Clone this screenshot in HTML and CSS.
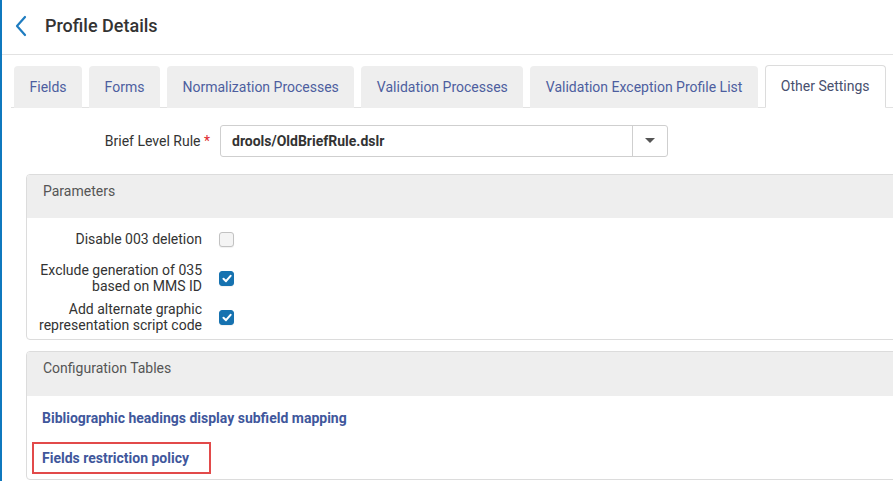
FILE: index.html
```html
<!DOCTYPE html>
<html>
<head>
<meta charset="utf-8">
<link rel="stylesheet" href="styles.css">
</head>
<body>
<div class="page">
  <header class="header">
    <svg class="back" width="14" height="22" viewBox="0 0 14 22"><path d="M11 2 L3 11 L11 20" fill="none" stroke="#1e7cc0" stroke-width="2.2" stroke-linecap="round" stroke-linejoin="round"/></svg>
    <h1 class="title">Profile Details</h1>
  </header>
  <nav class="tabs">
    <div class="tab">Fields</div>
    <div class="tab">Forms</div>
    <div class="tab">Normalization Processes</div>
    <div class="tab">Validation Processes</div>
    <div class="tab">Validation Exception Profile List</div>
    <div class="tab active">Other Settings</div>
  </nav>
  <div class="form-row">
    <label class="form-label">Brief Level Rule <span class="req">*</span></label>
    <div class="select">
      <span class="select-value">drools/OldBriefRule.dslr</span>
      <span class="select-btn"><svg width="10" height="6" viewBox="0 0 10 6"><path d="M0 0 H10 L5 5 Z" fill="#555"/></svg></span>
    </div>
  </div>
  <section class="panel">
    <div class="panel-head">Parameters</div>
    <div class="panel-body params">
      <div class="param">
        <div class="param-label">Disable 003 deletion</div>
        <span class="cb"></span>
      </div>
      <div class="param">
        <div class="param-label">Exclude generation of 035<br>based on MMS ID</div>
        <span class="cb checked"><svg width="10" height="9" viewBox="0 0 10 9"><path d="M1.5 4.8 L4 7.2 L8.6 1.8" fill="none" stroke="#fff" stroke-width="2" stroke-linecap="round" stroke-linejoin="round"/></svg></span>
      </div>
      <div class="param">
        <div class="param-label">Add alternate graphic<br>representation script code</div>
        <span class="cb checked"><svg width="10" height="9" viewBox="0 0 10 9"><path d="M1.5 4.8 L4 7.2 L8.6 1.8" fill="none" stroke="#fff" stroke-width="2" stroke-linecap="round" stroke-linejoin="round"/></svg></span>
      </div>
    </div>
  </section>
  <section class="panel panel-config">
    <div class="panel-head">Configuration Tables</div>
    <div class="panel-body links">
      <div class="link-row"><a class="link">Bibliographic headings display subfield mapping</a></div>
      <div class="link-row"><a class="link highlight">Fields restriction policy</a></div>
    </div>
  </section>
</div>
</body>
</html>
```
FILE: styles.css
```css
html, body {
  margin: 0;
  padding: 0;
  background: #fff;
  overflow: hidden;
}
body {
  font-family: Roboto, "Liberation Sans", Arial, sans-serif;
  color: #333;
  font-size: 14px;
}
.page {
  border-left: 2px solid #0f78be;
  min-height: 481px;
  box-sizing: border-box;
  width: 893px;
}
.header {
  height: 54px;
  border-bottom: 1px solid #e2e2e2;
  display: flex;
  align-items: center;
  padding-left: 12px;
}
.back {
  display: block;
  margin-bottom: 2px;
}
.title {
  margin: 0 0 2px 17px;
  font-size: 18px;
  font-weight: 500;
  color: #333;
  line-height: 22px;
}
.tabs {
  display: flex;
  gap: 7px;
  margin-top: 10px;
  margin-left: 9px;
  padding-left: 3px;
  border-bottom: 1px solid #e2e2e2;
  height: 42px;
  align-items: flex-end;
}
.tab {
  height: 42px;
  box-sizing: border-box;
  background: #eeeeee;
  color: #4d5e9f;
  font-size: 14px;
  line-height: 42px;
  padding: 0 15.5px;
  border-radius: 4px 4px 0 0;
  white-space: nowrap;
  margin-bottom: -1px;
}
.tab.active {
  background: #fff;
  border: 1px solid #dcdcdc;
  border-bottom: 1px solid #fff;
  height: 43px;
  line-height: 41px;
  color: #48506e;
  padding: 0 15px;
}
.form-row {
  display: flex;
  align-items: center;
  margin-top: 17px;
  height: 32px;
}
.form-label {
  width: 218px;
  text-align: right;
  padding-right: 10px;
  box-sizing: border-box;
  color: #333;
  font-size: 14px;
}
.req {
  color: #e0282e;
}
.select {
  width: 448px;
  height: 32px;
  box-sizing: border-box;
  border: 1px solid #cfcfcf;
  border-radius: 3px;
  display: flex;
  align-items: center;
}
.select-value {
  flex: 1;
  padding-left: 11px;
  font-weight: 700;
  color: #333;
}
.select-btn {
  width: 34px;
  height: 30px;
  border-left: 1px solid #cfcfcf;
  display: flex;
  align-items: center;
  justify-content: center;
}
.panel {
  margin-top: 17px;
  margin-left: 24px;
  margin-right: -20px;
  border: 1px solid #dcdcdc;
  border-radius: 4px;
  overflow: hidden;
}
.panel-config {
  margin-top: 11px;
}
.panel-head {
  height: 43px;
  background: #eeeeee;
  color: #555;
  font-size: 14px;
  line-height: 32px;
  padding-left: 16px;
}
.panel-config .panel-head {
  height: 44px;
}
.params {
  display: flex;
  flex-direction: column;
  gap: 7px;
  padding: 5px 0 6px;
}
.param {
  display: flex;
  align-items: center;
  min-height: 32px;
}
.param-label {
  width: 175px;
  text-align: right;
  line-height: 16px;
  color: #333;
  font-size: 14px;
}
.cb {
  width: 15px;
  height: 15px;
  box-sizing: border-box;
  margin-left: 17px;
  border-radius: 3px;
  border: 1px solid #c2c2c2;
  background: #f4f4f4;
  box-shadow: 0 1px 1px rgba(0,0,0,0.06);
  display: flex;
  align-items: center;
  justify-content: center;
}
.cb.checked {
  background: #1672b0;
  border-color: #1672b0;
}
.links {
  padding: 2px 0 1px;
}
.link-row {
  height: 40px;
  display: flex;
  align-items: center;
  padding-left: 15px;
}
.link {
  font-weight: 700;
  color: #3f579c;
  font-size: 14px;
}
.highlight {
  display: inline-block;
  margin-left: -10px;
  border: 2px solid #e24a4a;
  padding: 6px 20px 6px 8px;
  line-height: 16px;
}
```
